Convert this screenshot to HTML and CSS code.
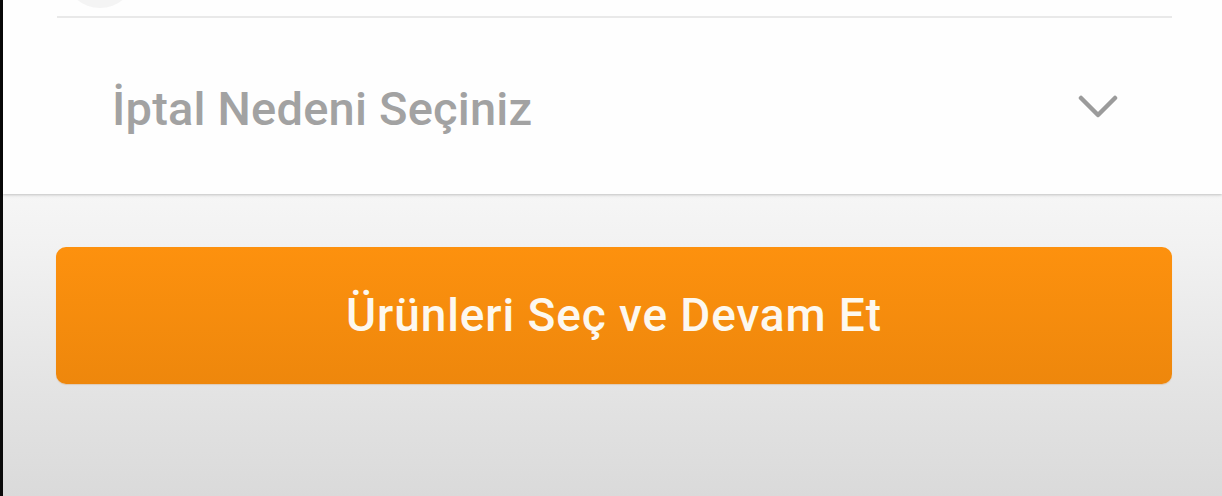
FILE: index.html
```html
<!DOCTYPE html>
<html lang="tr">
<head>
<meta charset="utf-8">
<link rel="stylesheet" href="styles.css">
</head>
<body>
<div class="screen">
  <div class="edge"></div>
  <div class="main">
    <section class="card">
      <div class="top-row"><span class="radio-peek"></span></div>
      <div class="divider"></div>
      <div class="select">
        <span class="select-label">İptal Nedeni Seçiniz</span>
        <svg class="chevron" width="40" height="26" viewBox="0 0 40 26"><path d="M3 4 L20 21 L37 4" fill="none" stroke="#9b9b9b" stroke-width="4.5" stroke-linecap="round" stroke-linejoin="round"/></svg>
      </div>
    </section>
    <div class="actions">
      <button class="primary">Ürünleri Seç ve Devam Et</button>
    </div>
  </div>
</div>
</body>
</html>
```

FILE: styles.css
```css
* { box-sizing: border-box; }
html, body { margin: 0; padding: 0; }
body {
  width: 1222px;
  height: 496px;
  overflow: hidden;
  font-family: Roboto, "Noto Sans", "Liberation Sans", sans-serif;
}
.screen {
  display: flex;
  height: 496px;
}
.edge {
  width: 3px;
  background: #0a0a0a;
  flex: none;
}
.main {
  flex: 1;
  display: flex;
  flex-direction: column;
}
.card {
  background: #fefefe;
  height: 194px;
  flex: none;
  padding: 0 50px 0 54px;
  box-shadow: 0 1px 2px rgba(0,0,0,0.16), 0 2px 4px rgba(0,0,0,0.05);
  position: relative;
  z-index: 1;
}
.top-row {
  height: 16px;
  overflow: hidden;
  padding-left: 10px;
}
.radio-peek {
  display: block;
  width: 66px;
  height: 60px;
  margin-top: -52px;
  border-radius: 50%;
  background: #f4f4f4;
}
.divider {
  height: 2px;
  background: #e9e9e9;
}
.select {
  height: 176px;
  display: flex;
  align-items: center;
  justify-content: space-between;
  padding: 0 54px 0 55px;
}
.select-label {
  font-size: 47px;
  font-weight: 500;
  color: #a2a2a2;
  letter-spacing: 0.2px;
  margin-top: 5px;
}
.chevron {
  display: block;
  margin-top: 1px;
}
.actions {
  flex: 1;
  padding: 53px 50px 0 53px;
  background: linear-gradient(to bottom, #f6f6f6 0px, #f2f2f2 50px, #e3e3e3 200px, #dadada 302px);
}
.primary {
  display: block;
  width: 100%;
  height: 137px;
  border: none;
  border-radius: 10px;
  background: linear-gradient(to bottom, #fd910e, #ee870c);
  color: #fdf8ef;
  font-family: Roboto, "Noto Sans", "Liberation Sans", sans-serif;
  font-size: 46px;
  font-weight: 500;
  padding: 0 0 2px 0;
  letter-spacing: 0.9px;
  box-shadow: 0 1px 1px rgba(200,120,40,0.25);
}
```
